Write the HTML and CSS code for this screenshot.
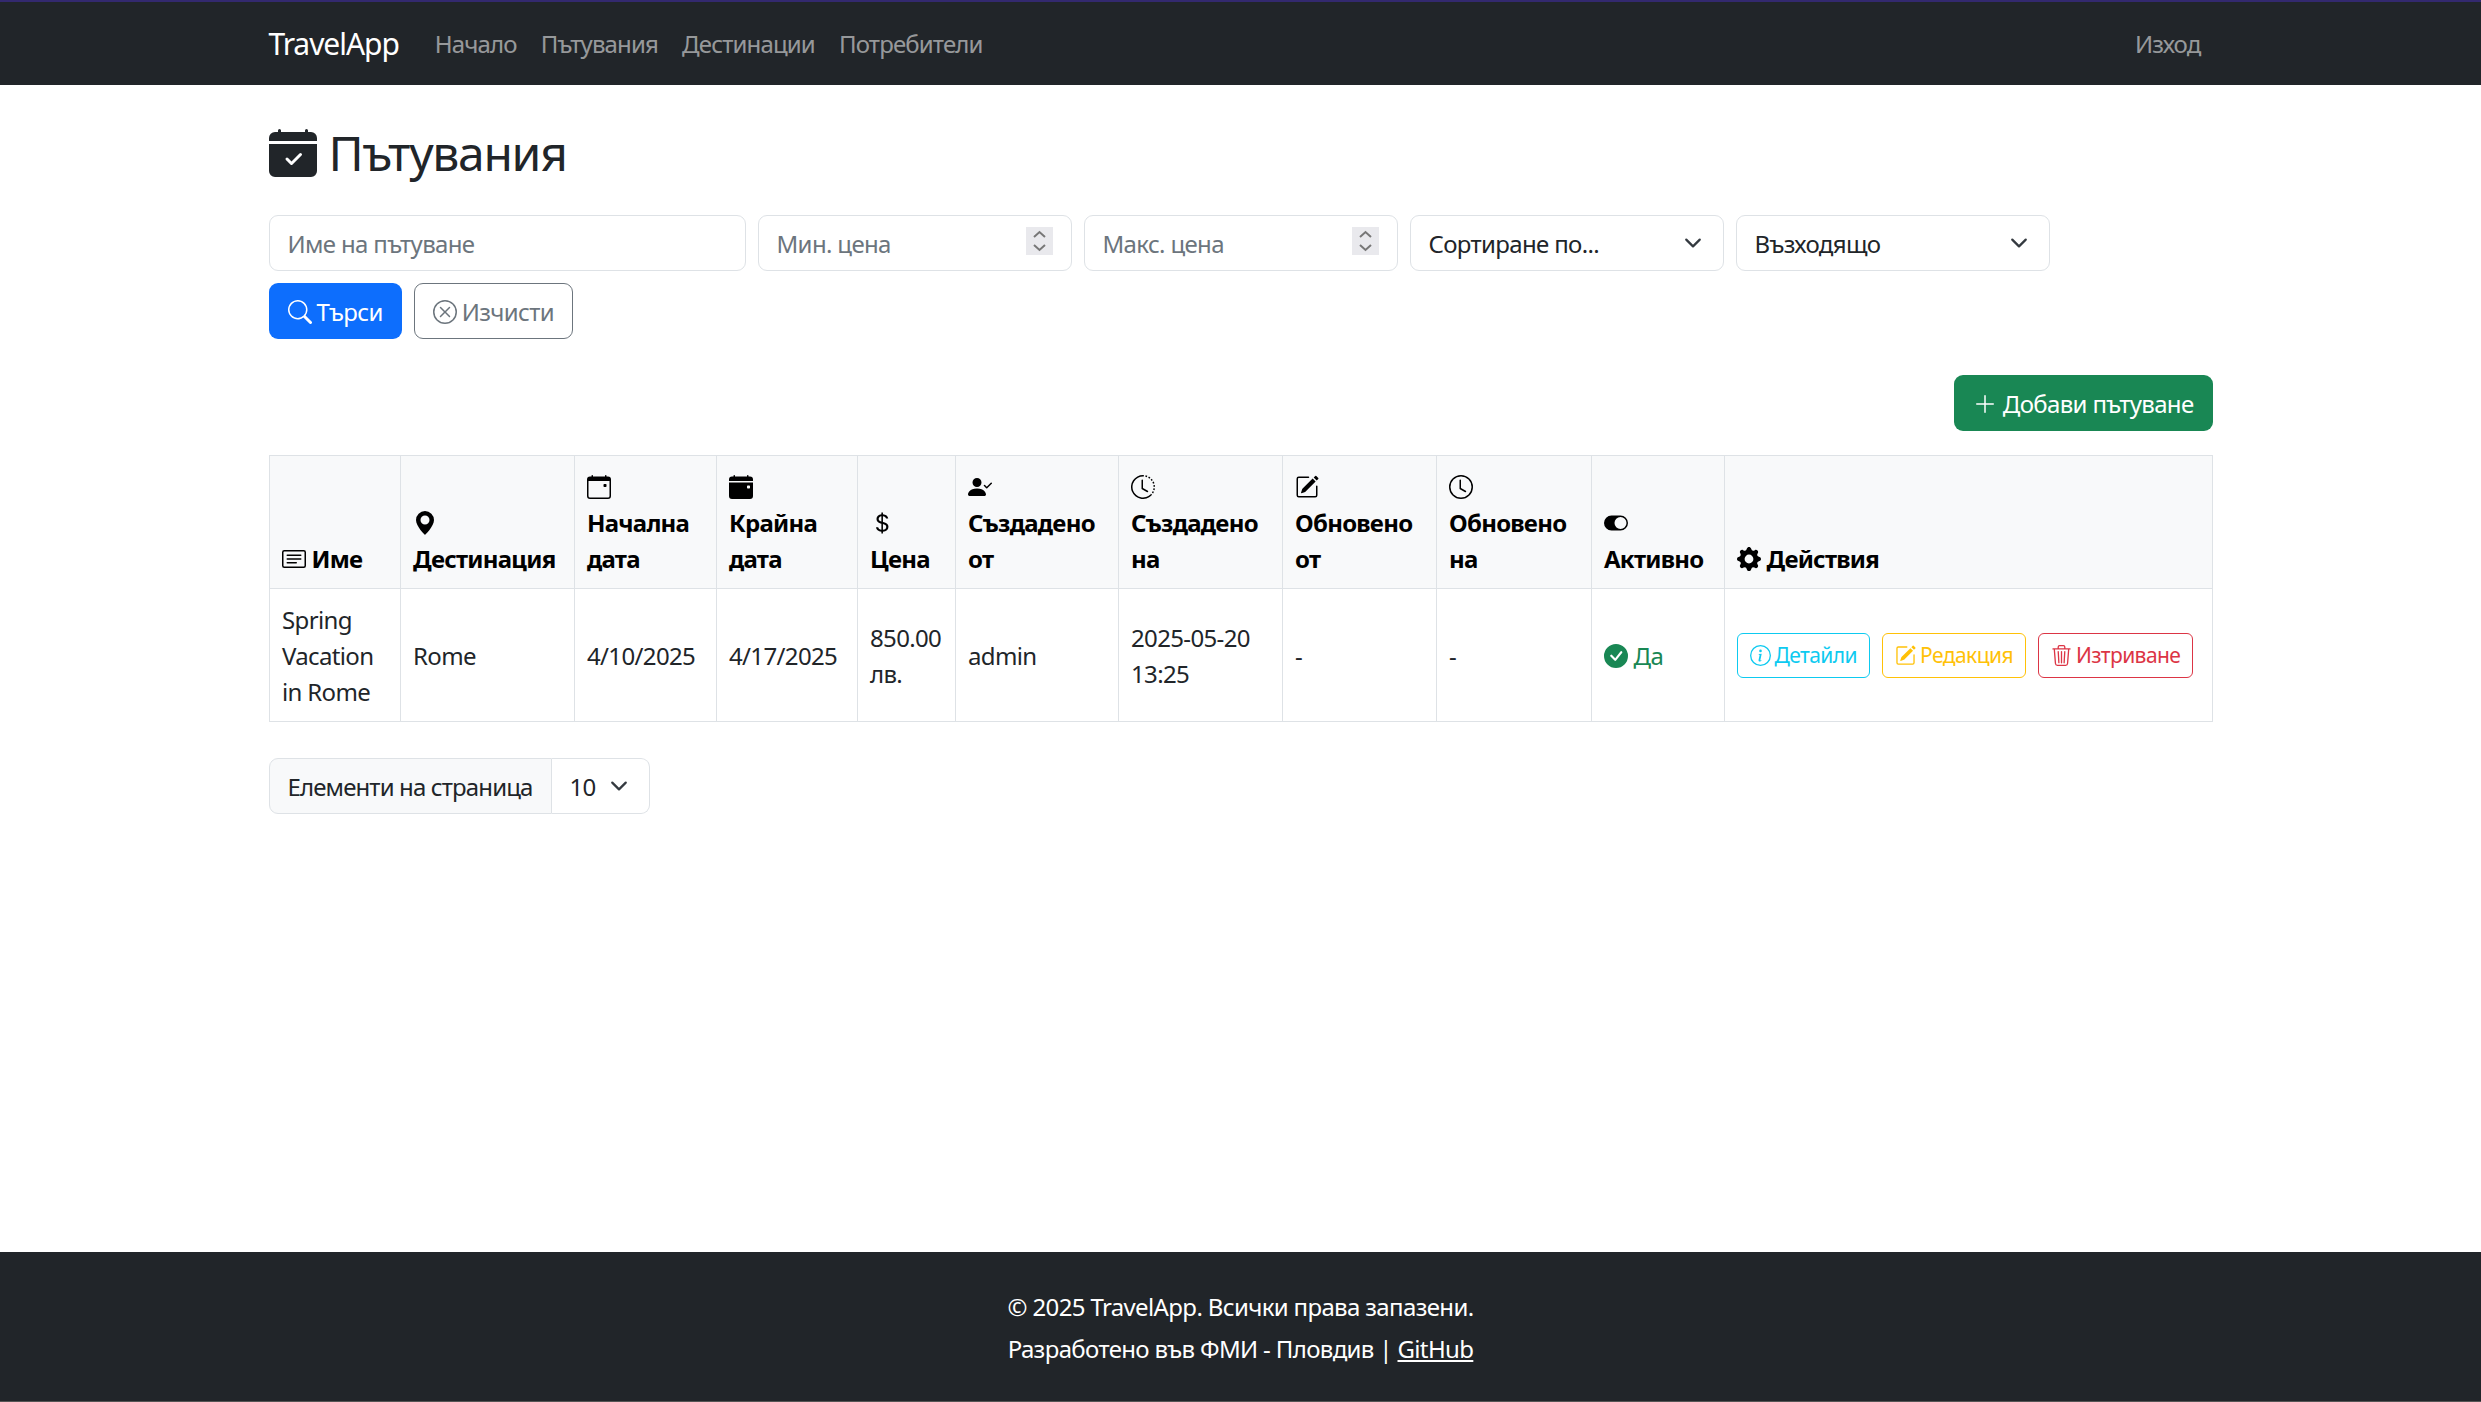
FILE: index.html
```html
<!DOCTYPE html>
<html lang="bg">
<head>
  <meta charset="UTF-8">
  <title>Пътувания - TravelApp</title>
  <link rel="stylesheet" href="styles.css">
</head>
<body>
  <nav class="navbar">
    <div class="nav-inner">
      <a class="brand" href="#">TravelApp</a>
      <a class="nav-link" href="#">Начало</a>
      <a class="nav-link" href="#">Пътувания</a>
      <a class="nav-link" href="#">Дестинации</a>
      <a class="nav-link" href="#">Потребители</a>
      <a class="nav-link logout" href="#">Изход</a>
    </div>
  </nav>

  <main class="container">
    <h2 class="page-title">
      <svg class="title-icon" viewBox="0 0 16 16"><path d="M4 .5a.5.5 0 0 0-1 0V1H2a2 2 0 0 0-2 2v1h16V3a2 2 0 0 0-2-2h-1V.5a.5.5 0 0 0-1 0V1H4V.5zM16 14V5H0v9a2 2 0 0 0 2 2h12a2 2 0 0 0 2-2zm-5.146-5.146-3 3a.5.5 0 0 1-.708 0l-1.5-1.5a.5.5 0 0 1 .708-.708L7.5 10.793l2.646-2.647a.5.5 0 0 1 .708.708z"/></svg>
      Пътувания
    </h2>

    <form class="filters">
      <input class="field field-name" type="text" placeholder="Име на пътуване">
      <input class="field field-small" type="number" placeholder="Мин. цена">
      <input class="field field-small" type="number" placeholder="Макс. цена">
      <select class="field field-small select"><option>Сортиране по...</option></select>
      <select class="field field-small select"><option>Възходящо</option></select>
      <div class="filter-buttons">
        <button class="btn btn-primary" type="button">
          <svg class="icon" viewBox="0 0 16 16"><path d="M11.742 10.344a6.5 6.5 0 1 0-1.397 1.398h-.001c.03.04.062.078.098.115l3.85 3.85a1 1 0 0 0 1.415-1.414l-3.85-3.85a1.007 1.007 0 0 0-.115-.1zM12 6.5a5.5 5.5 0 1 1-11 0 5.5 5.5 0 0 1 11 0z"/></svg>
          Търси
        </button>
        <button class="btn btn-outline-secondary" type="button">
          <svg class="icon" viewBox="0 0 16 16"><path d="M8 15A7 7 0 1 1 8 1a7 7 0 0 1 0 14zm0 1A8 8 0 1 0 8 0a8 8 0 0 0 0 16z"/><path d="M4.646 4.646a.5.5 0 0 1 .708 0L8 7.293l2.646-2.647a.5.5 0 0 1 .708.708L8.707 8l2.647 2.646a.5.5 0 0 1-.708.708L8 8.707l-2.646 2.647a.5.5 0 0 1-.708-.708L7.293 8 4.646 5.354a.5.5 0 0 1 0-.708z"/></svg>
          Изчисти
        </button>
      </div>
    </form>

    <div class="toolbar">
      <button class="btn btn-success" type="button">
        <svg class="icon" viewBox="0 0 16 16"><path d="M8 2a.5.5 0 0 1 .5.5v5h5a.5.5 0 0 1 0 1h-5v5a.5.5 0 0 1-1 0v-5h-5a.5.5 0 0 1 0-1h5v-5A.5.5 0 0 1 8 2Z"/></svg>
        Добави пътуване
      </button>
    </div>

    <table class="trips">
      <colgroup>
        <col class="c-name"><col class="c-dest"><col class="c-start"><col class="c-end"><col class="c-price"><col class="c-cby"><col class="c-con"><col class="c-uby"><col class="c-uon"><col class="c-active"><col>
      </colgroup>
      <thead>
        <tr>
          <th><svg class="icon" viewBox="0 0 16 16"><path d="M14.5 3a.5.5 0 0 1 .5.5v9a.5.5 0 0 1-.5.5h-13a.5.5 0 0 1-.5-.5v-9a.5.5 0 0 1 .5-.5h13zm-13-1A1.5 1.5 0 0 0 0 3.5v9A1.5 1.5 0 0 0 1.5 14h13a1.5 1.5 0 0 0 1.5-1.5v-9A1.5 1.5 0 0 0 14.5 2h-13z"/><path d="M3 5.5a.5.5 0 0 1 .5-.5h9a.5.5 0 0 1 0 1h-9a.5.5 0 0 1-.5-.5zM3 8a.5.5 0 0 1 .5-.5h9a.5.5 0 0 1 0 1h-9A.5.5 0 0 1 3 8zm0 2.5a.5.5 0 0 1 .5-.5h6a.5.5 0 0 1 0 1h-6a.5.5 0 0 1-.5-.5z"/></svg> Име</th>
          <th><svg class="icon" viewBox="0 0 16 16"><path d="M8 16s6-5.686 6-10A6 6 0 0 0 2 6c0 4.314 6 10 6 10zm0-7a3 3 0 1 1 0-6 3 3 0 0 1 0 6z"/></svg><br>Дестинация</th>
          <th><svg class="icon" viewBox="0 0 16 16"><path d="M11 6.5a.5.5 0 0 1 .5-.5h1a.5.5 0 0 1 .5.5v1a.5.5 0 0 1-.5.5h-1a.5.5 0 0 1-.5-.5v-1z"/><path d="M3.5 0a.5.5 0 0 1 .5.5V1h8V.5a.5.5 0 0 1 1 0V1h1a2 2 0 0 1 2 2v11a2 2 0 0 1-2 2H2a2 2 0 0 1-2-2V3a2 2 0 0 1 2-2h1V.5a.5.5 0 0 1 .5-.5zM1 4v10a1 1 0 0 0 1 1h12a1 1 0 0 0 1-1V4H1z"/></svg><br>Начална дата</th>
          <th><svg class="icon" viewBox="0 0 16 16"><path d="M4 .5a.5.5 0 0 0-1 0V1H2a2 2 0 0 0-2 2v1h16V3a2 2 0 0 0-2-2h-1V.5a.5.5 0 0 0-1 0V1H4V.5zM16 14V5H0v9a2 2 0 0 0 2 2h12a2 2 0 0 0 2-2zm-3.5-7h1a.5.5 0 0 1 .5.5v1a.5.5 0 0 1-.5.5h-1a.5.5 0 0 1-.5-.5v-1a.5.5 0 0 1 .5-.5z"/></svg><br>Крайна дата</th>
          <th><svg class="icon" viewBox="0 0 16 16"><path d="M4 10.781c.148 1.667 1.513 2.85 3.591 3.003V15h1.043v-1.216c2.27-.179 3.678-1.438 3.678-3.3 0-1.59-.947-2.51-2.956-3.028l-.722-.187V3.467c1.122.11 1.879.714 2.07 1.616h1.47c-.166-1.6-1.54-2.748-3.54-2.875V1H7.591v1.233c-1.939.23-3.27 1.472-3.27 3.156 0 1.454.966 2.483 2.661 2.917l.61.162v4.031c-1.149-.17-1.94-.8-2.131-1.718H4zm3.391-3.836c-1.043-.263-1.6-.825-1.6-1.616 0-.944.704-1.641 1.8-1.828v3.495l-.2-.05zm1.591 1.872c1.287.323 1.852.859 1.852 1.769 0 1.097-.826 1.828-2.2 1.939V8.73l.348.086z"/></svg><br>Цена</th>
          <th><svg class="icon" viewBox="0 0 16 16"><path d="M15.854 5.146a.5.5 0 0 1 0 .708l-3 3a.5.5 0 0 1-.708 0l-1.5-1.5a.5.5 0 0 1 .708-.708L12.5 7.793l2.646-2.647a.5.5 0 0 1 .708 0z"/><path d="M1 14s-1 0-1-1 1-4 6-4 6 3 6 4-1 1-1 1H1zm5-6a3 3 0 1 0 0-6 3 3 0 0 0 0 6z"/></svg><br>Създадено от</th>
          <th><svg class="icon" viewBox="0 0 16 16"><path d="M8.515 1.019A7 7 0 0 0 8 1V0a8 8 0 0 1 .589.022l-.074.997zm2.004.45a7.003 7.003 0 0 0-.985-.299l.219-.976c.383.086.76.2 1.126.342l-.36.933zm1.37.71a7.01 7.01 0 0 0-.439-.27l.493-.87a8.025 8.025 0 0 1 .979.654l-.615.789a6.996 6.996 0 0 0-.418-.302zm1.834 1.79a6.99 6.99 0 0 0-.653-.796l.724-.69c.27.285.52.59.747.91l-.818.576zm.744 1.352a7.08 7.08 0 0 0-.214-.468l.893-.45a7.976 7.976 0 0 1 .45 1.088l-.95.313a7.023 7.023 0 0 0-.179-.483zm.53 2.507a6.991 6.991 0 0 0-.1-1.025l.985-.17c.067.386.106.778.116 1.17l-1 .025zm-.131 1.538c.033-.17.06-.339.081-.51l.993.123a7.957 7.957 0 0 1-.23 1.155l-.964-.267c.046-.165.086-.332.12-.501zm-.952 2.379c.184-.29.346-.594.486-.908l.914.405c-.16.36-.345.706-.555 1.038l-.845-.535zm-.964 1.205c.122-.122.239-.248.35-.378l.758.653a8.073 8.073 0 0 1-.401.432l-.707-.707z"/><path d="M8 1a7 7 0 1 0 4.95 11.95l.707.707A8.001 8.001 0 1 1 8 0v1z"/><path d="M7.5 3a.5.5 0 0 1 .5.5v5.21l3.248 1.856a.5.5 0 0 1-.496.868l-3.5-2A.5.5 0 0 1 7 9V3.5a.5.5 0 0 1 .5-.5z"/></svg><br>Създадено на</th>
          <th><svg class="icon" viewBox="0 0 16 16"><path d="M15.502 1.94a.5.5 0 0 1 0 .706L14.459 3.69l-2-2L13.502.646a.5.5 0 0 1 .707 0l1.293 1.293zm-1.75 2.456-2-2L4.939 9.21a.5.5 0 0 0-.121.196l-.805 2.414a.25.25 0 0 0 .316.316l2.414-.805a.5.5 0 0 0 .196-.12l6.813-6.814z"/><path d="M1 13.5A1.5 1.5 0 0 0 2.5 15h11a1.5 1.5 0 0 0 1.5-1.5v-6a.5.5 0 0 0-1 0v6a.5.5 0 0 1-.5.5h-11a.5.5 0 0 1-.5-.5v-11a.5.5 0 0 1 .5-.5H9a.5.5 0 0 0 0-1H2.5A1.5 1.5 0 0 0 1 2.5v11z"/></svg><br>Обновено от</th>
          <th><svg class="icon" viewBox="0 0 16 16"><path d="M8 3.5a.5.5 0 0 0-1 0V9a.5.5 0 0 0 .252.434l3.5 2a.5.5 0 0 0 .496-.868L8 8.71V3.5z"/><path d="M8 16A8 8 0 1 0 8 0a8 8 0 0 0 0 16zm7-8A7 7 0 1 1 1 8a7 7 0 0 1 14 0z"/></svg><br>Обновено на</th>
          <th><svg class="icon" viewBox="0 0 16 16"><path d="M5 3a5 5 0 0 0 0 10h6a5 5 0 0 0 0-10H5zm6 9a4 4 0 1 1 0-8 4 4 0 0 1 0 8z"/></svg><br>Активно</th>
          <th><svg class="icon" viewBox="0 0 16 16"><path d="M9.405 1.05c-.413-1.4-2.397-1.4-2.81 0l-.1.34a1.464 1.464 0 0 1-2.105.872l-.31-.17c-1.283-.698-2.686.705-1.987 1.987l.169.311c.446.82.023 1.841-.872 2.105l-.34.1c-1.4.413-1.4 2.397 0 2.81l.34.1a1.464 1.464 0 0 1 .872 2.105l-.17.31c-.698 1.283.705 2.686 1.987 1.987l.311-.169a1.464 1.464 0 0 1 2.105.872l.1.34c.413 1.4 2.397 1.4 2.81 0l.1-.34a1.464 1.464 0 0 1 2.105-.872l.31.17c1.283.698 2.686-.705 1.987-1.987l-.169-.311a1.464 1.464 0 0 1 .872-2.105l.34-.1c1.4-.413 1.4-2.397 0-2.81l-.34-.1a1.464 1.464 0 0 1-.872-2.105l.17-.31c.698-1.283-.705-2.686-1.987-1.987l-.311.169a1.464 1.464 0 0 1-2.105-.872l-.1-.34zM8 10.93a2.929 2.929 0 1 1 0-5.86 2.929 2.929 0 0 1 0 5.858z"/></svg> Действия</th>
        </tr>
      </thead>
      <tbody>
        <tr>
          <td>Spring Vacation in Rome</td>
          <td>Rome</td>
          <td>4/10/2025</td>
          <td>4/17/2025</td>
          <td>850.00 лв.</td>
          <td>admin</td>
          <td>2025-05-20 13:25</td>
          <td>-</td>
          <td>-</td>
          <td class="active-yes"><svg class="icon" viewBox="0 0 16 16"><path d="M16 8A8 8 0 1 1 0 8a8 8 0 0 1 16 0zm-3.97-3.03a.75.75 0 0 0-1.08.022L7.477 9.417 5.384 7.323a.75.75 0 0 0-1.06 1.06L6.97 11.03a.75.75 0 0 0 1.079-.02l3.992-4.99a.75.75 0 0 0-.01-1.05z"/></svg> Да</td>
          <td class="actions-cell">
            <div class="actions">
              <a class="btn-sm btn-info" href="#"><svg class="icon" viewBox="0 0 16 16"><path d="M8 15A7 7 0 1 1 8 1a7 7 0 0 1 0 14zm0 1A8 8 0 1 0 8 0a8 8 0 0 0 0 16z"/><path d="m8.93 6.588-2.29.287-.082.38.45.083c.294.07.352.176.288.469l-.738 3.468c-.194.897.105 1.319.808 1.319.545 0 1.178-.252 1.465-.598l.088-.42c-.2.176-.492.246-.686.246-.275 0-.375-.193-.304-.533L8.93 6.588zM9 4.5a1 1 0 1 1-2 0 1 1 0 0 1 2 0z"/></svg> Детайли</a>
              <a class="btn-sm btn-warning" href="#"><svg class="icon" viewBox="0 0 16 16"><path d="M15.502 1.94a.5.5 0 0 1 0 .706L14.459 3.69l-2-2L13.502.646a.5.5 0 0 1 .707 0l1.293 1.293zm-1.75 2.456-2-2L4.939 9.21a.5.5 0 0 0-.121.196l-.805 2.414a.25.25 0 0 0 .316.316l2.414-.805a.5.5 0 0 0 .196-.12l6.813-6.814z"/><path d="M1 13.5A1.5 1.5 0 0 0 2.5 15h11a1.5 1.5 0 0 0 1.5-1.5v-6a.5.5 0 0 0-1 0v6a.5.5 0 0 1-.5.5h-11a.5.5 0 0 1-.5-.5v-11a.5.5 0 0 1 .5-.5H9a.5.5 0 0 0 0-1H2.5A1.5 1.5 0 0 0 1 2.5v11z"/></svg> Редакция</a>
              <a class="btn-sm btn-danger" href="#"><svg class="icon" viewBox="0 0 16 16"><path d="M6.5 1h3a.5.5 0 0 1 .5.5v1H6v-1a.5.5 0 0 1 .5-.5ZM11 2.5v-1A1.5 1.5 0 0 0 9.5 0h-3A1.5 1.5 0 0 0 5 1.5v1H2.506a.58.58 0 0 0-.01 0H1.5a.5.5 0 0 0 0 1h.538l.853 10.66A2 2 0 0 0 4.885 16h6.23a2 2 0 0 0 1.994-1.84l.853-10.66h.538a.5.5 0 0 0 0-1h-.997a.58.58 0 0 0-.01 0H11Zm1.958 1-.846 10.58a1 1 0 0 1-.997.92h-6.23a1 1 0 0 1-.997-.92L3.042 3.5h9.916Zm-7.487 1a.5.5 0 0 1 .528.47l.5 8.5a.5.5 0 0 1-.998.06L5 5.03a.5.5 0 0 1 .47-.53Zm5.058 0a.5.5 0 0 1 .47.53l-.5 8.5a.5.5 0 1 1-.998-.06l.5-8.5a.5.5 0 0 1 .528-.47ZM8 4.5a.5.5 0 0 1 .5.5v8.5a.5.5 0 0 1-1 0V5a.5.5 0 0 1 .5-.5Z"/></svg> Изтриване</a>
            </div>
          </td>
        </tr>
      </tbody>
    </table>

    <div class="page-size">
      <span class="page-size-label">Елементи на страница</span>
      <select class="page-size-select select"><option>10</option></select>
    </div>
  </main>

  <footer class="footer">
    <p>© 2025 TravelApp. Всички права запазени.</p>
    <p>Разработено във ФМИ - Пловдив | <a href="#">GitHub</a></p>
  </footer>
</body>
</html>
```

FILE: styles.css
```css
* {
  box-sizing: border-box;
  letter-spacing: -0.027em;
}
html, body {
  height: 100%;
}
body {
  margin: 0;
  min-height: 1402px;
  display: flex;
  flex-direction: column;
  font-family: "Noto Sans", "Open Sans", sans-serif;
  font-size: 24px;
  line-height: 36px;
  color: #212529;
  background: #fff;
}
.icon {
  width: 1em;
  height: 1em;
  fill: currentColor;
  vertical-align: -0.125em;
}

.navbar {
  height: 85px;
  background: #212529;
  border-top: 2px solid #33296f;
}
.nav-inner {
  width: 1980px;
  height: 83px;
  margin: 0 auto;
  padding: 0 18px;
  display: flex;
  align-items: center;
}
.brand {
  font-size: 30px;
  letter-spacing: -0.035em;
  color: #fff;
  text-decoration: none;
  margin-right: 24px;
}
.nav-link {
  padding: 0 12px;
  letter-spacing: -0.035em;
  color: rgba(255, 255, 255, 0.55);
  text-decoration: none;
}
.logout {
  margin-left: auto;
}

.container {
  width: 1980px;
  margin: 0 auto;
  padding: 39px 18px 0;
  flex: 1;
}
.page-title {
  margin: 0 0 33px;
  font-size: 48px;
  line-height: 58px;
  font-weight: 400;
  display: flex;
  align-items: center;
  gap: 12px;
}
.title-icon {
  width: 48px;
  height: 48px;
  fill: currentColor;
}

.filters {
  display: flex;
  flex-wrap: wrap;
  gap: 12px;
}
.field {
  height: 56px;
  padding: 0 18px;
  font: inherit;
  color: #212529;
  background-color: #fff;
  border: 1px solid #dee2e6;
  border-radius: 9px;
}
.field::placeholder {
  color: #6c757d;
}
.field-name {
  width: 477px;
}
.field-small {
  width: 314px;
}
.field::-webkit-inner-spin-button {
  -webkit-appearance: none;
  opacity: 1;
  width: 27px;
  height: 28px;
  background: #e9e9ed url("data:image/svg+xml,%3Csvg xmlns='http://www.w3.org/2000/svg' viewBox='0 0 27 28'%3E%3Cpath fill='none' stroke='%23777' stroke-width='2' d='M8 10l5.500-5 5.500 5M8 18l5.500 5 5.500-5'/%3E%3C/svg%3E") no-repeat center;
}
.select {
  -webkit-appearance: none;
  appearance: none;
  padding-top: 1px;
  background-image: url("data:image/svg+xml,%3Csvg xmlns='http://www.w3.org/2000/svg' viewBox='0 0 16 16'%3E%3Cpath fill='none' stroke='%23343a40' stroke-linecap='round' stroke-linejoin='round' stroke-width='2' d='m2 5 6 6 6-6'/%3E%3C/svg%3E");
  background-repeat: no-repeat;
  background-position: right 18px center;
  background-size: 24px 18px;
}
.filter-buttons {
  width: 100%;
  display: flex;
  gap: 12px;
}

.btn {
  height: 56px;
  padding: 2px 18px 0;
  font: inherit;
  border: 1px solid transparent;
  border-radius: 9px;
  display: inline-flex;
  align-items: center;
  gap: 5px;
}
.btn-primary {
  color: #fff;
  background: #0d6efd;
}
.btn-outline-secondary {
  color: #6c757d;
  background: #fff;
  border-color: #6c757d;
}
.btn-success {
  color: #fff;
  background: #198754;
  gap: 6px;
}
.toolbar {
  display: flex;
  justify-content: flex-end;
  margin: 36px 0 24px;
}

.trips {
  width: 100%;
  table-layout: fixed;
  border-collapse: collapse;
  margin-bottom: 36px;
}
.trips th,
.trips td {
  padding: 13px 12px 11px 12.5px;
  border: 1px solid #dee2e6;
  text-align: left;
}
.trips th {
  background: #f8f9fa;
  color: #000;
  font-weight: 700;
  letter-spacing: -0.031em;
  vertical-align: bottom;
}
.trips td {
  vertical-align: middle;
}
.trips .actions-cell {
  padding: 12px;
}
.c-name { width: 131px; }
.c-dest { width: 174px; }
.c-start { width: 142px; }
.c-end { width: 141px; }
.c-price { width: 98px; }
.c-cby { width: 163px; }
.c-con { width: 164px; }
.c-uby { width: 154px; }
.c-uon { width: 155px; }
.c-active { width: 133px; }
.active-yes {
  color: #198754;
}
.actions {
  display: flex;
  gap: 12px;
}
.btn-sm {
  height: 45px;
  padding: 0 12px;
  font-size: 21px;
  border: 1px solid currentColor;
  border-radius: 6px;
  text-decoration: none;
  display: inline-flex;
  align-items: center;
  gap: 4px;
  white-space: nowrap;
}
.btn-info { color: #0dcaf0; }
.btn-warning { color: #ffc107; }
.btn-danger { color: #dc3545; }

.page-size {
  display: flex;
  width: 381px;
  height: 56px;
}
.page-size-label {
  padding: 1px 18px 0;
  letter-spacing: -0.036em;
  background: #f8f9fa;
  border: 1px solid #dee2e6;
  border-radius: 9px 0 0 9px;
  display: flex;
  align-items: center;
  white-space: nowrap;
}
.page-size-select {
  flex: 1;
  min-width: 0;
  padding: 1px 18px 0;
  font: inherit;
  color: #212529;
  background-color: #fff;
  border: 1px solid #dee2e6;
  border-left: 0;
  border-radius: 0 9px 9px 0;
}

.footer {
  height: 150px;
  padding: 37px 0 0;
  background: #212529;
  color: #fff;
  text-align: center;
  border-bottom: 1px solid #555;
}
.footer p {
  margin: 0 0 6px;
}
.footer a {
  color: #fff;
}
```
